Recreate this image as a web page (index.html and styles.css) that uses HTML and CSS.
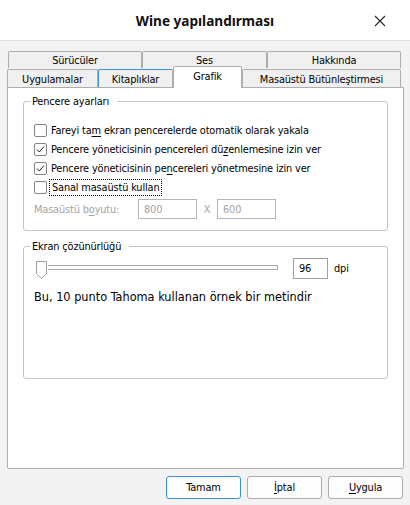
FILE: index.html
```html
<!DOCTYPE html>
<html lang="tr">
<head>
<meta charset="utf-8">
<title>Wine yapılandırması</title>
<link rel="stylesheet" href="styles.css">
</head>
<body>
<div class="window">
  <header class="titlebar">
    <div class="title">Wine yapılandırması</div>
    <svg class="close" width="12" height="12" viewBox="0 0 12 12"><path d="M1 1 L11 11 M11 1 L1 11" stroke="#222" stroke-width="1.1" fill="none"/></svg>
  </header>
  <main class="content">
    <div class="tabs">
      <div class="tabrow tabrow-top">
        <div class="tab w134">Sürücüler</div>
        <div class="tab w125">Ses</div>
        <div class="tab w134">Hakkında</div>
      </div>
      <div class="tabrow tabrow-bottom">
        <div class="tab w91">Uygulamalar</div>
        <div class="tab w75 hover">Kitaplıklar</div>
        <div class="tab w69 selected">Grafik</div>
        <div class="tab w159">Masaüstü Bütünleştirmesi</div>
      </div>
    </div>
    <section class="panel">
      <fieldset class="group group-window">
        <legend>Pencere ayarları</legend>
        <div class="check-row"><span class="box"></span><span>Fareyi ta<u>m</u> ekran pencerelerde otomatik olarak yakala</span></div>
        <div class="check-row"><span class="box checked"><svg width="11" height="11" viewBox="0 0 11 11"><path d="M2 5.5 L4.3 8 L9 2.5" stroke="#222" stroke-width="1" fill="none"/></svg></span><span>Pencere yöneticisinin pencereleri dü<u>z</u>enlemesine izin ver</span></div>
        <div class="check-row"><span class="box checked"><svg width="11" height="11" viewBox="0 0 11 11"><path d="M2 5.5 L4.3 8 L9 2.5" stroke="#222" stroke-width="1" fill="none"/></svg></span><span>Pencere yöneticisinin pe<u>n</u>cereleri yönetmesine izin ver</span></div>
        <div class="check-row"><span class="box"></span><span class="focus">Sanal masaüstü kullan</span></div>
        <div class="size-row">
          <span class="size-label">Masaüstü b<u>o</u>yutu:</span>
          <span class="field disabled">800</span>
          <span class="times">X</span>
          <span class="field disabled">600</span>
        </div>
      </fieldset>
      <fieldset class="group group-dpi">
        <legend>Ekran çözünürlüğü</legend>
        <div class="slider-row">
          <div class="slider">
            <svg class="thumb" width="12" height="18" viewBox="0 0 12 18"><path d="M0.5 0.5 H10.5 V12.5 L5.5 17.5 L0.5 12.5 Z" fill="#fff" stroke="#a0a0a0"/></svg>
            <div class="track"></div>
          </div>
          <span class="field dpi">96</span>
          <span class="unit">dpi</span>
        </div>
        <p class="sample">Bu, 10 punto Tahoma kullanan örnek bir metindir</p>
      </fieldset>
    </section>
    <div class="buttons">
      <button class="btn default">Tamam</button>
      <button class="btn"><u>İ</u>ptal</button>
      <button class="btn"><u>U</u>ygula</button>
    </div>
  </main>
</div>
</body>
</html>
```
FILE: styles.css
```css
* { box-sizing: border-box; }
html, body { margin: 0; padding: 0; }
body {
  width: 410px;
  height: 505px;
  background: #f3f3f3;
  font-family: "DejaVu Sans Condensed", "DejaVu Sans", sans-serif;
  font-stretch: condensed;
  font-size: 10.9px;
  letter-spacing: -0.15px;
  color: #000;
  overflow: hidden;
}
.window { width: 410px; height: 505px; display: flex; flex-direction: column; }
.titlebar {
  height: 41px;
  background: #fff;
  border-bottom: 1px solid #e3e3e3;
  display: flex;
  align-items: center;
  justify-content: center;
  position: relative;
}
.title {
  font-family: "Noto Sans", sans-serif;
  font-stretch: normal;
  font-weight: bold;
  font-size: 13.6px;
  letter-spacing: 0;
  color: #111;
  margin-top: 1px;
}
.close { position: absolute; right: 24px; top: 15px; }
.content { padding: 10px 6px 0 7px; }
.tabs { display: flex; flex-direction: column; }
.tabrow { display: flex; }
.tabrow-top { padding-left: 1px; height: 17px; }
.tabrow-bottom { height: 19px; align-items: flex-end; }
.tab {
  background: #f0f0f0;
  border: 1px solid #adadad;
  border-bottom: none;
  border-radius: 2px 2px 0 0;
  display: flex;
  align-items: center;
  justify-content: center;
  line-height: 13px;
}
.tabrow-top .tab { height: 17px; padding-top: 0; }
.tabrow-bottom .tab { height: 18px; padding-top: 2px; }
.tab.hover { border-color: #3d8ee0; border-right-color: #adadad; }
.tab.selected {
  background: #fff;
  height: 22px;
  margin-bottom: -1px;
  padding-top: 0;
  padding-bottom: 2px;
  position: relative;
  z-index: 2;
}
.w134 { width: 134px; }
.w125 { width: 125px; }
.w91 { width: 91px; }
.w75 { width: 75px; }
.w69 { width: 69px; }
.w159 { width: 159px; }
.panel {
  background: #fff;
  border: 1px solid #adadad;
  border-radius: 0 0 2px 2px;
  height: 382px;
  padding: 7px 15px 0 15px;
  display: flex;
  flex-direction: column;
}
.group {
  margin: 0;
  border: 1px solid #c4c4c4;
  border-radius: 3px;
  padding: 0 9px 0 10px;
  min-width: 0;
}
.group legend {
  padding: 0 8px 0 2px;
  margin-left: -4px;
  line-height: 13px;
  color: #000;
}
.group-window { padding-top: 13px; padding-bottom: 11px; }
.check-row { display: flex; align-items: center; height: 19px; }
.box {
  width: 13px; height: 13px;
  border: 1px solid #858585;
  border-radius: 2px;
  background: #fff;
  margin-right: 4px;
  display: flex; align-items: center; justify-content: center;
  flex: none;
}
.focus { outline: 1px dotted #000; outline-offset: 1px; padding: 0 1px; }
u { text-decoration-thickness: 1px; text-underline-offset: 2px; }
.size-row { display: flex; align-items: center; height: 20px; margin-top: 2px; color: #a3a3a3; }
.size-label { width: 104px; }
.field {
  height: 20px;
  border: 1px solid #b6b6b6;
  display: flex; align-items: center;
  padding-left: 5px;
  background: #fff;
}
.size-row .field { width: 59px; }
.times { width: 20px; text-align: center; }
.group-dpi { margin-top: 9px; padding-top: 4px; padding-bottom: 73px; }
.slider-row { display: flex; align-items: center; height: 22px; }
.slider { width: 243px; height: 18px; display: flex; align-items: center; margin-left: 2px; margin-top: 4px; }
.thumb { flex: none; }
.track { width: 230px; height: 5px; border: 1px solid #a8a8a8; border-left: none; background: #fff; margin-top: -6px; }
.field.dpi { width: 35px; height: 21px; margin-left: 14px; border-color: #a0a0a0; color: #000; padding-left: 5px; }
.unit { margin-left: 6px; }
.sample {
  margin: 10px 0 0 0;
  font-size: 12.6px;
  letter-spacing: 0;
  line-height: 16px;
}
.buttons { display: flex; justify-content: flex-end; gap: 6px; margin-top: 7px; padding-right: 1px; }
.btn {
  width: 75px; height: 23px;
  background: #fdfdfd;
  border: 1px solid #adadad;
  border-radius: 3px;
  font: inherit;
  font-stretch: condensed;
  letter-spacing: inherit;
  color: #000;
  padding: 0;
}
.btn.default { border-color: #3d8ee0; }
```
